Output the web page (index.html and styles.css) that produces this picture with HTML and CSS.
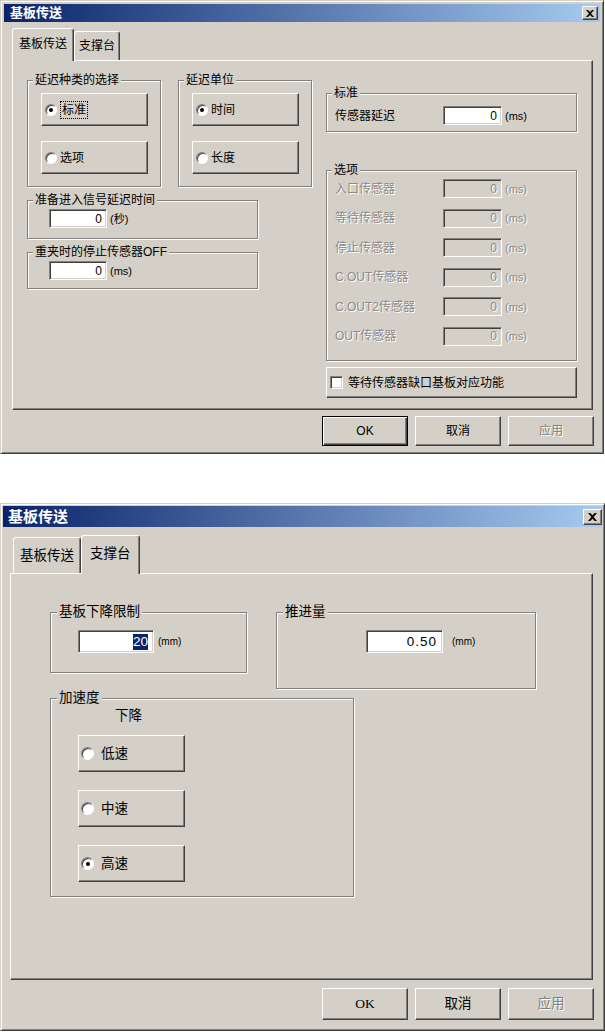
FILE: index.html
```html
<!DOCTYPE html>
<html lang="zh-CN">
<head>
  <meta charset="UTF-8" />
  <meta name="viewport" content="width=device-width, initial-scale=1.0"/>
  <title>基板传送</title>
  <link rel="stylesheet" href="styles.css">
</head>
<body>

  <!-- 基板传送 tab -->
  <div class="dialog d1">
    <div class="titlebar">
      <span class="title">基板传送</span>
      <button class="close"><svg width="8" height="7" viewBox="0 0 8 7"><path d="M0 0h2l2 2 2-2h2L5 3.5 8 7H6L4 5 2 7H0l3-3.5z" fill="#000"/></svg></button>
    </div>
    <div class="tabs">
      <div class="tab active">基板传送</div>
      <div class="tab">支撑台</div>
    </div>
    <div class="panel">
      <div class="col-left">
        <div class="row">
          <fieldset class="group choice">
            <legend>延迟种类的选择</legend>
            <div class="pbtn"><span class="radio on"></span><span class="focus">标准</span></div>
            <div class="pbtn"><span class="radio"></span><span>选项</span></div>
          </fieldset>
          <fieldset class="group choice">
            <legend>延迟单位</legend>
            <div class="pbtn"><span class="radio on"></span><span>时间</span></div>
            <div class="pbtn"><span class="radio"></span><span>长度</span></div>
          </fieldset>
        </div>
        <fieldset class="group single g-ready">
          <legend>准备进入信号延迟时间</legend>
          <div class="edit">0</div><span class="unit">(秒)</span>
        </fieldset>
        <fieldset class="group single g-clamp">
          <legend>重夹时的停止传感器OFF</legend>
          <div class="edit">0</div><span class="unit">(ms)</span>
        </fieldset>
      </div>

      <div class="col-right">
        <fieldset class="group g-std">
          <legend>标准</legend>
          <div class="field">
            <span class="label">传感器延迟</span>
            <div class="edit">0</div><span class="unit">(ms)</span>
          </div>
        </fieldset>
        <fieldset class="group g-opt">
          <legend>选项</legend>
          <div class="field off"><span class="label">入口传感器</span><div class="edit">0</div><span class="unit">(ms)</span></div>
          <div class="field off"><span class="label">等待传感器</span><div class="edit">0</div><span class="unit">(ms)</span></div>
          <div class="field off"><span class="label">停止传感器</span><div class="edit">0</div><span class="unit">(ms)</span></div>
          <div class="field off"><span class="label">C.OUT传感器</span><div class="edit">0</div><span class="unit">(ms)</span></div>
          <div class="field off"><span class="label">C.OUT2传感器</span><div class="edit">0</div><span class="unit">(ms)</span></div>
          <div class="field off"><span class="label">OUT传感器</span><div class="edit">0</div><span class="unit">(ms)</span></div>
        </fieldset>
        <div class="pbtn wide"><span class="check"></span><span>等待传感器缺口基板对应功能</span></div>
      </div>
    </div>
    <div class="actions">
      <button class="btn default">OK</button>
      <button class="btn">取消</button>
      <button class="btn" disabled>应用</button>
    </div>
  </div>

  <!-- 支撑台 tab -->
  <div class="dialog d2">
    <div class="titlebar">
      <span class="title">基板传送</span>
      <button class="close"><svg width="9" height="8" viewBox="0 0 8 7"><path d="M0 0h2l2 2 2-2h2L5 3.5 8 7H6L4 5 2 7H0l3-3.5z" fill="#000"/></svg></button>
    </div>
    <div class="tabs">
      <div class="tab">基板传送</div>
      <div class="tab active">支撑台</div>
    </div>
    <div class="panel">
      <div class="row">
        <fieldset class="group g-limit">
          <legend>基板下降限制</legend>
          <div class="edit"><span class="sel">20</span></div><span class="unit">(mm)</span>
        </fieldset>
        <fieldset class="group g-feed">
          <legend>推进量</legend>
          <div class="edit">0.50</div><span class="unit">(mm)</span>
        </fieldset>
      </div>
      <fieldset class="group g-accel">
        <legend>加速度</legend>
        <div class="caption">下降</div>
        <div class="pbtn"><span class="radio"></span><span>低速</span></div>
        <div class="pbtn"><span class="radio"></span><span>中速</span></div>
        <div class="pbtn"><span class="radio on"></span><span>高速</span></div>
      </fieldset>
    </div>
    <div class="actions">
      <button class="btn ok">OK</button>
      <button class="btn">取消</button>
      <button class="btn" disabled>应用</button>
    </div>
  </div>

</body>
</html>
```

FILE: styles.css
```css
* {
  box-sizing: border-box;
}

body {
  margin: 0;
  background: #fff;
  font-family: "Liberation Sans", "Noto Sans CJK SC", sans-serif;
  font-size: 12px;
  line-height: 14px;
  color: #000;
}

/* window frame */
.dialog {
  display: flex;
  flex-direction: column;
  background: #d4d0c8;
  border: 1px solid;
  border-color: #d4d0c8 #404040 #404040 #d4d0c8;
  box-shadow: inset 1px 1px #fff, inset -1px -1px #808080;
  padding: 3px;
}

.d1 {
  width: 604px;
  height: 454px;
}

.d2 {
  width: 605px;
  height: 528px;
  margin-top: 49px;
  padding: 2px;
  font-size: 13.5px;
  line-height: 16px;
}

.titlebar {
  display: flex;
  align-items: center;
  justify-content: space-between;
  height: 18px;
  padding: 0 2px 0 6px;
  background: linear-gradient(to right, #0a246a, #a6caf0);
}

.title {
  color: #fff;
  font-weight: bold;
  font-size: 13px;
}

.d2 .titlebar {
  height: 21px;
  padding: 0 0 0 5px;
}

.d2 .title {
  font-size: 15px;
}

.close {
  display: flex;
  align-items: center;
  justify-content: center;
  width: 16px;
  height: 14px;
  padding: 0;
  background: #d4d0c8;
  border: 1px solid;
  border-color: #fff #404040 #404040 #fff;
  box-shadow: inset -1px -1px #808080;
}

.d2 .close {
  width: 19px;
  height: 16px;
}

/* tabs */
.tabs {
  display: flex;
  align-items: flex-end;
  height: 32px;
  margin-top: 6px;
  padding-left: 8px;
}

.tab {
  display: flex;
  align-items: center;
  height: 29px;
  padding: 0 4px;
  border: 1px solid;
  border-bottom: 0;
  border-color: #fff #404040 #404040 #fff;
  box-shadow: inset -1px 0 #808080;
  border-radius: 3px 3px 0 0;
}

.tab.active {
  position: relative;
  z-index: 1;
  height: 33px;
  margin-bottom: -1px;
  padding: 0 6px 3px;
  background: #d4d0c8;
}

.d2 .tabs {
  height: 38px;
  margin-top: 8px;
  padding-left: 10px;
}

.d2 .tab {
  height: 36px;
  padding: 0 6px;
}

.d2 .tab.active {
  height: 39px;
  padding: 0 8px 3px;
}

.panel {
  display: flex;
  flex: none;
  height: 350px;
  margin: 0 7px 0 8px;
  padding: 12px 0 0 14px;
  gap: 14px;
  border: 1px solid;
  border-color: #fff #404040 #404040 #fff;
  box-shadow: inset -1px -1px #808080;
}

.d2 .panel {
  flex-direction: column;
  gap: 0;
  height: 407px;
  margin: 0 9px 0 7px;
  padding: 30px 0 0 39px;
}

/* group boxes: the legend sits after the left padding, so pull it back */
.group {
  --pad: 0px;
  margin: 0;
  padding: 0 0 0 var(--pad);
  min-width: 0;
  border: 1px solid #808080;
  box-shadow: inset 1px 1px #fff, 1px 1px #fff;
}

legend {
  margin-left: calc(5px - var(--pad));
  padding: 0 2px;
  line-height: 14px;
  background: #d4d0c8;
}

.d2 legend {
  margin-left: calc(6px - var(--pad));
  line-height: 16px;
}

.col-left {
  display: flex;
  flex-direction: column;
  gap: 6px;
  width: 285px;
}

.row {
  display: flex;
  gap: 17px;
}

.choice {
  --pad: 13px;
  display: flex;
  flex-direction: column;
  gap: 15px;
  width: 134px;
  height: 114px;
  padding-top: 6px;
}

.single {
  --pad: 21px;
  display: flex;
  align-items: center;
  width: 231px;
  padding-top: 2px;
}

.single .edit {
  width: 58px;
}

.g-ready {
  height: 46px;
}

.g-clamp {
  height: 44px;
}

.col-right {
  display: flex;
  flex-direction: column;
  width: 251px;
  margin-top: 13px;
}

.g-std {
  --pad: 8px;
  height: 46px;
  padding-top: 6px;
}

.g-opt {
  --pad: 8px;
  display: flex;
  flex-direction: column;
  gap: 10.6px;
  height: 198px;
  margin-top: 31px;
  padding-top: 2px;
}

.field {
  display: flex;
  align-items: center;
}

.field .label {
  width: 108px;
}

.field .edit {
  width: 59px;
}

.field.off .label,
.field.off .edit,
.field.off .unit {
  color: #8a8a8a;
  text-shadow: 1px 1px #fff;
}

.field.off .edit {
  background: #d4d0c8;
}

/* controls */
.edit {
  display: flex;
  align-items: center;
  justify-content: flex-end;
  height: 19px;
  padding: 0 4px;
  background: #fff;
  border: 1px solid;
  border-color: #808080 #fff #fff #808080;
  box-shadow: inset 1px 1px #404040, inset -1px -1px #d4d0c8;
}

.unit {
  margin-left: 3px;
  font-size: 11px;
}

.pbtn {
  display: flex;
  align-items: center;
  gap: 3px;
  width: 107px;
  height: 33px;
  padding-left: 3px;
  border: 1px solid;
  border-color: #fff #404040 #404040 #fff;
  box-shadow: inset -1px -1px #808080;
}

.pbtn.wide {
  width: 251px;
  height: 31px;
  margin-top: 6px;
  gap: 5px;
}

.radio {
  position: relative;
  flex: none;
  width: 12px;
  height: 12px;
  border-radius: 50%;
  background: #fff;
  border: 1px solid;
  border-color: #808080 #fff #fff #808080;
  box-shadow: inset 1px 1px #404040;
}

.radio.on::after {
  content: "";
  position: absolute;
  left: 3px;
  top: 3px;
  width: 4px;
  height: 4px;
  border-radius: 50%;
  background: #000;
}

.focus {
  outline: 1px dotted #000;
  outline-offset: 1px;
  margin-left: 2px;
}

.check {
  flex: none;
  width: 13px;
  height: 13px;
  background: #fff;
  border: 1px solid;
  border-color: #808080 #fff #fff #808080;
  box-shadow: inset 1px 1px #404040, inset -1px -1px #d4d0c8;
}

/* second page */
.d2 .row {
  gap: 29px;
  align-items: flex-start;
}

.g-limit,
.g-feed {
  display: flex;
  flex-wrap: wrap;
  align-items: center;
  align-content: flex-start;
  padding-top: 10px;
}

.g-limit {
  --pad: 27px;
  width: 197px;
  height: 69px;
}

.g-feed {
  --pad: 89px;
  width: 260px;
  height: 85px;
}

.d2 .edit {
  height: 23px;
  width: 76px;
  padding: 0 5px;
  letter-spacing: 1px;
}

.d2 .g-feed .edit {
  width: 77px;
}

.d2 .unit {
  margin-left: 4px;
  font-size: 10px;
}

.d2 .g-feed .unit {
  margin-left: 9px;
}

.sel {
  background: #0a246a;
  color: #fff;
  letter-spacing: 0;
}

.g-accel {
  --pad: 27px;
  display: flex;
  flex-direction: column;
  gap: 18px;
  width: 304px;
  height: 207px;
  margin-top: 1px;
  padding-top: 2px;
}

.caption {
  margin: 0 0 -7px 37px;
}

.d2 .pbtn {
  height: 37px;
  padding-left: 2px;
  gap: 7px;
}

.d2 .radio {
  width: 13px;
  height: 13px;
}

.d2 .radio.on::after {
  left: 3.5px;
  top: 3.5px;
}

/* dialog buttons */
.actions {
  display: flex;
  justify-content: flex-end;
  gap: 7px;
  margin-top: 6px;
  padding-right: 6px;
}

.d2 .actions {
  margin-top: 8px;
  padding-right: 8px;
}

.btn {
  width: 86px;
  height: 30px;
  padding: 0;
  font: inherit;
  color: #000;
  background: #d4d0c8;
  border: 1px solid;
  border-color: #fff #404040 #404040 #fff;
  box-shadow: inset -1px -1px #808080;
}

.d2 .btn {
  height: 32px;
}

.btn.default {
  border-color: #000;
  box-shadow: inset 1px 1px #fff, inset -1px -1px #404040, inset -2px -2px #808080;
}

.btn.ok {
  font-family: "Liberation Serif", serif;
}

.btn:disabled {
  color: #808080;
  text-shadow: 1px 1px #fff;
}
```
